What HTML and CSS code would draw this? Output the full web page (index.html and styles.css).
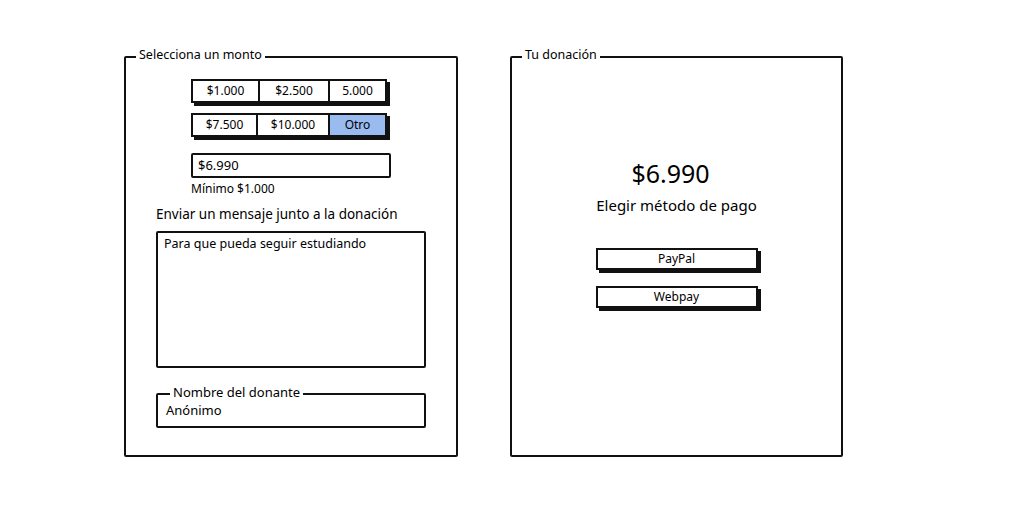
FILE: index.html
```html
<!DOCTYPE html>
<html lang="es">
<head>
<meta charset="utf-8">
<title>Donación</title>
<link rel="stylesheet" href="styles.css">
</head>
<body>
<div class="page">
  <fieldset class="panel panel-left">
    <legend class="legend">Selecciona un monto</legend>
    <div class="amounts">
      <div class="seg">
        <span class="seg-item" style="width:65px">$1.000</span>
        <span class="seg-item" style="width:70px">$2.500</span>
        <span class="seg-item" style="width:57px">5.000</span>
      </div>
      <div class="seg seg-2">
        <span class="seg-item" style="width:63px">$7.500</span>
        <span class="seg-item" style="width:72px">$10.000</span>
        <span class="seg-item active" style="width:57px">Otro</span>
      </div>
      <div class="input">$6.990</div>
      <div class="hint">Mínimo $1.000</div>
    </div>
    <div class="message">
      <div class="msg-label">Enviar un mensaje junto a la donación</div>
      <div class="textarea">Para que pueda seguir estudiando</div>
      <fieldset class="name">
        <legend class="name-legend">Nombre del donante</legend>
        <div class="name-value">Anónimo</div>
      </fieldset>
    </div>
  </fieldset>
  <fieldset class="panel panel-right">
    <legend class="legend">Tu donación</legend>
    <div class="total">$6.990</div>
    <div class="method">Elegir método de pago</div>
    <div class="btn btn-first">PayPal</div>
    <div class="btn">Webpay</div>
  </fieldset>
</div>
</body>
</html>
```
FILE: styles.css
```css
html, body {
  margin: 0;
  padding: 0;
  background: #fff;
}
body {
  font-family: "Noto Sans", "Open Sans", sans-serif;
  color: #000;
}
.page {
  display: flex;
  gap: 52px;
  padding: 46px 0 0 124px;
}
.panel {
  margin: 0;
  border: 2px solid #111;
  border-radius: 2px;
  padding: 0;
  box-sizing: border-box;
  height: 411px;
}
.panel-left { width: 334px; }
.panel-right { width: 333px; display: flex; flex-direction: column; align-items: center; }
.legend {
  font-size: 12.5px;
  line-height: 18px;
  padding: 0 3px 4px;
  margin-left: 10px;
}
.amounts {
  margin: 11px 0 0 65px;
}
.seg {
  display: flex;
  width: max-content;
  border: 2px solid #111;
  box-shadow: 3px 3px 0 #111;
  height: 24px;
  box-sizing: border-box;
}
.seg-2 { margin-top: 10px; }
.seg-item {
  box-sizing: border-box;
  font-size: 12px;
  line-height: 20px;
  text-align: center;
  border-left: 2px solid #111;
}
.seg-item:first-child { border-left: none; }
.seg-item.active { background: #99bbf0; }
.input {
  margin-top: 16px;
  width: 200px;
  height: 25px;
  box-sizing: border-box;
  border: 2px solid #111;
  border-radius: 2px;
  font-size: 13px;
  line-height: 21px;
  padding-left: 5px;
}
.hint {
  font-size: 12px;
  line-height: 16px;
  margin-top: 3px;
}
.message {
  margin: 7px 0 0 30px;
  width: 270px;
}
.msg-label {
  font-size: 13.5px;
  line-height: 20px;
}
.textarea {
  margin-top: 7px;
  height: 137px;
  box-sizing: border-box;
  border: 2px solid #111;
  border-radius: 2px;
  font-size: 12.5px;
  line-height: 18px;
  padding: 2px 6px;
}
.name {
  margin: 16px 0 0;
  padding: 0 8px;
  border: 2px solid #111;
  border-radius: 2px;
  height: 44px;
  box-sizing: border-box;
}
.name-legend {
  font-size: 13px;
  line-height: 16px;
  padding: 0 3px 4px;
  margin-left: 4px;
}
.name-value {
  font-size: 13px;
  line-height: 18px;
  margin-top: -3px;
}
.total {
  margin-top: 89px;
  font-size: 25px;
  line-height: 32px;
  margin-right: 12px;
}
.method {
  margin-top: 6px;
  font-size: 15px;
  line-height: 20px;
}
.btn {
  width: 162px;
  height: 22px;
  box-sizing: border-box;
  border: 2px solid #111;
  box-shadow: 3px 3px 0 #111;
  font-size: 12px;
  line-height: 18px;
  text-align: center;
  margin-top: 16px;
}
.btn-first { margin-top: 33px; }
```
